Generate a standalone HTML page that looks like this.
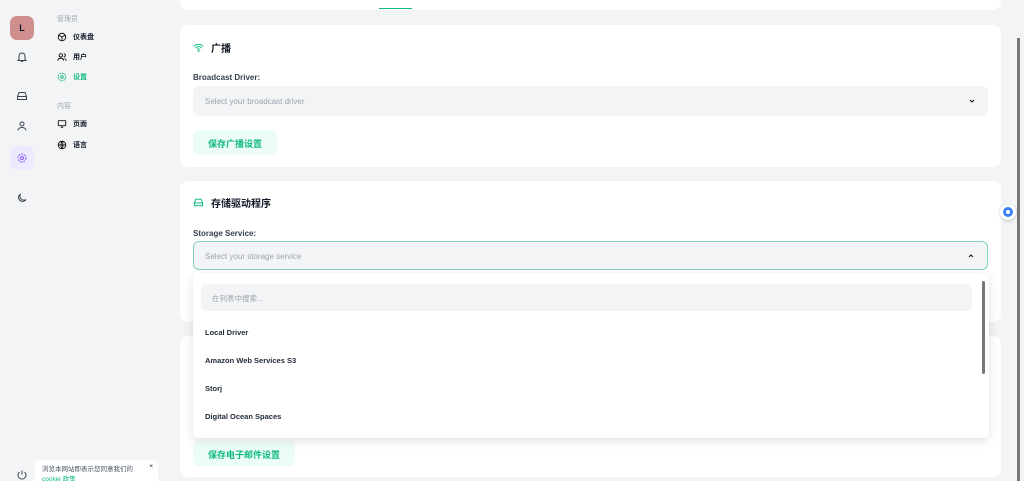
<!DOCTYPE html>
<html style="overflow:hidden;height:481px"><head><meta charset="utf-8"><style>
*{box-sizing:border-box;margin:0;padding:0}
body{width:1024px;height:481px;overflow:hidden;background:#f3f4f6;font-family:"Liberation Sans","Noto Sans CJK SC",sans-serif;position:relative;color:#111827}
.abs{position:absolute}
.card{position:absolute;left:180px;width:821px;background:#fff;border-radius:8px}
.sel{position:absolute;left:13px;width:795px;height:30px;background:#f3f4f6;border-radius:6px;font-size:8px;color:#9ca3af;padding:11px 12px}
.lbl{position:absolute;left:13px;font-size:8px;font-weight:bold;color:#374151}
.btn{position:absolute;left:13px;height:25px;background:#ecfdf5;color:#10b981;font-size:9px;font-weight:bold;border-radius:6px;padding:7px 15px}
.h{position:absolute;left:13px;font-size:10px;font-weight:bold;display:flex;align-items:center;gap:7px}
.nav{position:absolute;left:57px;font-size:7px;font-weight:bold;display:flex;align-items:center;gap:6px}
.sm{position:absolute;left:57px;font-size:7px;color:#9ca3af}
.it{position:absolute;left:12px;font-size:7.5px;font-weight:bold;color:#1f2937}
svg{display:block}
</style></head><body>
<div class="abs" style="left:10px;top:16px;width:24px;height:24px;border-radius:7px;background:#d18e8e;font-size:9px;font-weight:bold;text-align:center;line-height:24px">L</div>
<svg class="abs" style="left:16px;top:51px" width="12" height="12" viewBox="0 0 24 24" fill="none" stroke="#374151" stroke-width="2"><path d="M6 17V10a6 6 0 0112 0v7l2 2H4zM10 21h4"/></svg>
<svg class="abs" style="left:16px;top:90px" width="12" height="12" viewBox="0 0 24 24" fill="none" stroke="#374151" stroke-width="2"><path d="M3 13l3-8h12l3 8v6H3zM3 13h18"/></svg>
<svg class="abs" style="left:16px;top:120px" width="12" height="12" viewBox="0 0 24 24" fill="none" stroke="#374151" stroke-width="2"><circle cx="12" cy="8" r="4"/><path d="M4 21c0-4 4-6 8-6s8 2 8 6"/></svg>
<div class="abs" style="left:10px;top:146px;width:24px;height:24px;border-radius:7px;background:#ede9fe"></div>
<svg class="abs" style="left:16px;top:152px" width="12" height="12" viewBox="0 0 24 24" fill="none" stroke="#8b5cf6" stroke-width="2"><circle cx="12" cy="12" r="3"/><circle cx="12" cy="12" r="8" stroke-dasharray="4 2"/></svg>
<svg class="abs" style="left:16px;top:192px" width="12" height="12" viewBox="0 0 24 24" fill="none" stroke="#374151" stroke-width="2"><path d="M20 15A8 8 0 019 4a8 8 0 1011 11z"/></svg>
<svg class="abs" style="left:16px;top:469px" width="12" height="12" viewBox="0 0 24 24" fill="none" stroke="#374151" stroke-width="2"><path d="M12 3v8M7 6a8 8 0 1010 0"/></svg>
<div class="sm" style="top:14px">管理员</div>
<div class="nav" style="top:32px"><svg width="10" height="10" viewBox="0 0 24 24" fill="none" stroke="#111" stroke-width="2.2"><circle cx="12" cy="12" r="9"/><path d="M12 12L5 8M12 12l7-4M12 12v9"/></svg>仪表盘</div>
<div class="nav" style="top:52px"><svg width="10" height="10" viewBox="0 0 24 24" fill="none" stroke="#111" stroke-width="2.2"><circle cx="9" cy="8" r="4"/><path d="M2 21c0-4 3-6 7-6s7 2 7 6M16 4a4 4 0 010 8M22 21c0-3-2-5-4-5"/></svg>用户</div>
<div class="nav" style="top:72px;color:#10b981"><svg width="10" height="10" viewBox="0 0 24 24" fill="none" stroke="#10b981" stroke-width="2.2"><circle cx="12" cy="12" r="3"/><circle cx="12" cy="12" r="9" stroke-dasharray="4 2"/></svg>设置</div>
<div class="sm" style="top:101px">内容</div>
<div class="nav" style="top:119px"><svg width="10" height="10" viewBox="0 0 24 24" fill="none" stroke="#111" stroke-width="2.2"><rect x="3" y="4" width="18" height="12" rx="1"/><path d="M9 20h6M12 16v4"/></svg>页面</div>
<div class="nav" style="top:140px"><svg width="10" height="10" viewBox="0 0 24 24" fill="none" stroke="#111" stroke-width="2.2"><circle cx="12" cy="12" r="9"/><path d="M3 12h18M12 3c3 3 3 15 0 18M12 3c-3 3-3 15 0 18"/></svg>语言</div>
<div class="abs" style="left:35px;top:460px;width:123px;height:21px;overflow:hidden;background:#fff;border-radius:5px 5px 0 0;font-size:6.5px;color:#4b5563;padding:5px 7px;line-height:10px">浏览本网站即表示您同意我们的<br><span style="color:#10b981">cookie 政策</span><span class="abs" style="right:5px;top:2px;color:#111">×</span></div>
<div class="card" style="top:-10px;height:20px"><div class="abs" style="left:199px;top:18px;width:33px;height:1px;background:#10b981"></div></div>
<div class="card" style="top:25px;height:142px">
<div class="h" style="top:15px"><svg width="11" height="11" viewBox="0 0 24 24" fill="none" stroke="#10b981" stroke-width="2.2"><path d="M2 9a15 15 0 0120 0M5 13a10 10 0 0114 0M8.5 16.5a5 5 0 017 0"/><circle cx="12" cy="20" r="1" fill="#10b981"/></svg>广播</div>
<div class="lbl" style="top:48px">Broadcast Driver:</div>
<div class="sel" style="top:61px">Select your broadcast driver<svg class="abs" style="right:12px;top:11px" width="8" height="8" viewBox="0 0 24 24" fill="none" stroke="#111" stroke-width="3"><path d="M6 9l6 6 6-6"/></svg></div>
<div class="btn" style="top:105px">保存广播设置</div>
</div>
<div class="card" style="top:181px;height:141px">
<div class="h" style="top:14px"><svg width="11" height="11" viewBox="0 0 24 24" fill="none" stroke="#10b981" stroke-width="2.2"><path d="M3 13l3-8h12l3 8v6H3zM3 13h18"/></svg>存储驱动程序</div>
<div class="lbl" style="top:48px">Storage Service:</div>
<div class="sel" style="top:60px;border:1px solid #7dd3c0;height:29px;padding:10px 11px">Select your storage service<svg class="abs" style="right:12px;top:10px" width="8" height="8" viewBox="0 0 24 24" fill="none" stroke="#111" stroke-width="3"><path d="M6 15l6-6 6 6"/></svg></div>
</div>
<div class="card" style="top:336px;height:141px">
<div class="btn" style="top:105px">保存电子邮件设置</div>
</div>
<div class="abs" style="left:193px;top:273px;width:796px;height:165px;background:#fff;border-radius:5px;box-shadow:0 3px 10px rgba(0,0,0,.12)">
<div class="abs" style="left:8px;top:11px;width:771px;height:27px;background:#f3f4f6;border-radius:5px;font-size:7.5px;color:#9ca3af;padding:9px 11px">在列表中搜索...</div>
<div class="it" style="top:55px">Local Driver</div>
<div class="it" style="top:83px">Amazon Web Services S3</div>
<div class="it" style="top:111px">Storj</div>
<div class="it" style="top:139px">Digital Ocean Spaces</div>
<div class="abs" style="left:789px;top:8px;width:3px;height:93px;background:#777;border-radius:2px"></div>
</div>
<div class="abs" style="left:1017px;top:38px;width:3px;height:443px;background:#777"></div>
<div class="abs" style="left:1000px;top:204px;width:16px;height:16px;border-radius:50%;background:#fff;box-shadow:0 1px 3px rgba(0,0,0,.2)"><div class="abs" style="left:3px;top:3px;width:10px;height:10px;border-radius:50%;background:#3b82f6"></div><div class="abs" style="left:6px;top:6px;width:4px;height:4px;border-radius:50%;background:#fff"></div></div>
</body></html>
